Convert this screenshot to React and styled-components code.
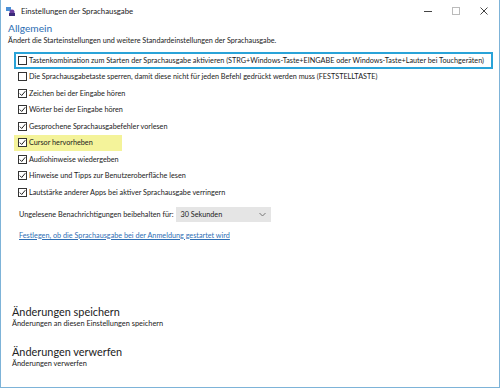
import styled, { createGlobalStyle } from 'styled-components';

const Global = createGlobalStyle`
  html, body { margin: 0; padding: 0; background: #fff; }
  body { font-family: Lato, "Open Sans", sans-serif; color: #1a1a1a; }
`;

const Window = styled.div`
  width: 500px;
  height: 388px;
  box-sizing: border-box;
  border: 1px solid #7db3d8;
  border-top: none;
  display: flex;
  flex-direction: column;
  overflow: hidden;
  background: #fff;
`;

const TitleBar = styled.div`
  height: 21px;
  display: flex;
  align-items: center;
  padding-left: 5px;
  font-size: 7.8px;
  color: #222;
  & .title { margin-left: 5px; flex: 1; }
`;

const WinButton = styled.div`
  width: 28px;
  height: 21px;
  display: flex;
  align-items: center;
  justify-content: center;
`;

const Content = styled.div`
  flex: 1;
  display: flex;
  flex-direction: column;
  padding: 0 0 0 7px;
`;

const Heading = styled.div`
  font-size: 10.2px;
  color: #2b6db3;
  line-height: 14px;
`;

const Sub = styled.div`
  font-size: 7.25px;
  line-height: 11px;
  margin-bottom: 6px;
`;

const List = styled.div`
  display: flex;
  flex-direction: column;
  padding-left: 6px;
`;

const Row = styled.div`
  display: flex;
  align-items: center;
  height: 16.5px;
  box-sizing: border-box;
  padding-left: 2px;
  font-size: 7.25px;
  white-space: nowrap;
  width: ${(p) => (p.$focused ? '479px' : 'auto')};
  align-self: flex-start;
  border: 2px solid ${(p) => (p.$focused ? '#2aa3d8' : 'transparent')};
  background: ${(p) => (p.$highlight ? '#f4f39a' : 'transparent')};
  padding-right: ${(p) => (p.$highlight ? '27px' : '0')};
`;

const Box = styled.span`
  width: 7px;
  height: 7px;
  border: 1px solid #333;
  background: #fff;
  margin-right: 2px;
  display: inline-flex;
  align-items: center;
  justify-content: center;
  flex-shrink: 0;
`;

const SelectRow = styled.div`
  display: flex;
  align-items: center;
  padding-left: 11px;
  margin-top: 6px;
  font-size: 7.25px;
`;

const Select = styled.div`
  margin-left: 3px;
  width: 95px;
  height: 15px;
  background: #e5e5e5;
  display: flex;
  align-items: center;
  justify-content: space-between;
  padding: 0 5px 0 4px;
  box-sizing: border-box;
`;

const Link = styled.a`
  margin: 8px 0 0 11px;
  font-size: 7.25px;
  line-height: 11px;
  color: #2f6fb5;
  text-decoration: underline;
`;

const Action = styled.div`
  display: flex;
  flex-direction: column;
  padding-left: 4px;
  margin-top: ${(p) => p.$top}px;
  & .t { font-size: 10.9px; line-height: 15px; color: #222; }
  & .s { font-size: 7.4px; line-height: 10px; }
`;

const Check = ({ on }) => (
  <Box>
    {on && (
      <svg width="7" height="7" viewBox="0 0 7 7">
        <path d="M0.8 3.6 L2.7 5.5 L6.3 1.2" fill="none" stroke="#222" strokeWidth="1" />
      </svg>
    )}
  </Box>
);

const items = [
  { t: 'Tastenkombination zum Starten der Sprachausgabe aktivieren (STRG+Windows-Taste+EINGABE oder Windows-Taste+Lauter bei Touchgeräten)', on: false, focused: true },
  { t: 'Die Sprachausgabetaste sperren, damit diese nicht für jeden Befehl gedrückt werden muss (FESTSTELLTASTE)', on: false },
  { t: 'Zeichen bei der Eingabe hören', on: true },
  { t: 'Wörter bei der Eingabe hören', on: true },
  { t: 'Gesprochene Sprachausgabefehler vorlesen', on: true },
  { t: 'Cursor hervorheben', on: true, highlight: true },
  { t: 'Audiohinweise wiedergeben', on: true },
  { t: 'Hinweise und Tipps zur Benutzeroberfläche lesen', on: true },
  { t: 'Lautstärke anderer Apps bei aktiver Sprachausgabe verringern', on: true },
];

export default function App() {
  return (
    <>
      <Global />
      <Window>
        <TitleBar>
          <svg width="10" height="10" viewBox="0 0 10 10">
            <rect x="0" y="1" width="5" height="4" fill="#4a8fd6" />
            <circle cx="6" cy="6" r="2.5" fill="#6a3fa0" />
            <rect x="3" y="7" width="6" height="3" fill="#3b2a7a" />
          </svg>
          <span className="title">Einstellungen der Sprachausgabe</span>
          <WinButton>
            <svg width="8" height="8" viewBox="0 0 8 8"><path d="M0 4.5 H8" stroke="#444" strokeWidth="1" /></svg>
          </WinButton>
          <WinButton>
            <svg width="8" height="8" viewBox="0 0 8 8"><rect x="0.5" y="0.5" width="7" height="7" fill="none" stroke="#bbb" /></svg>
          </WinButton>
          <WinButton>
            <svg width="8" height="8" viewBox="0 0 8 8"><path d="M0.5 0.5 L7.5 7.5 M7.5 0.5 L0.5 7.5" stroke="#444" strokeWidth="1" /></svg>
          </WinButton>
          <span style={{ width: 1 }} />
        </TitleBar>
        <Content>
          <Heading>Allgemein</Heading>
          <Sub>Ändert die Starteinstellungen und weitere Standardeinstellungen der Sprachausgabe.</Sub>
          <List>
            {items.map((it) => (
              <Row key={it.t} $focused={it.focused} $highlight={it.highlight}>
                <Check on={it.on} />
                {it.t}
              </Row>
            ))}
          </List>
          <SelectRow>
            Ungelesene Benachrichtigungen beibehalten für:
            <Select>
              <span>30 Sekunden</span>
              <svg width="7" height="5" viewBox="0 0 7 5"><path d="M0.5 1 L3.5 4 L6.5 1" fill="none" stroke="#777" /></svg>
            </Select>
          </SelectRow>
          <Link>Festlegen, ob die Sprachausgabe bei der Anmeldung gestartet wird</Link>
          <Action $top={63}>
            <span className="t">Änderungen speichern</span>
            <span className="s">Änderungen an diesen Einstellungen speichern</span>
          </Action>
          <Action $top={15}>
            <span className="t">Änderungen verwerfen</span>
            <span className="s">Änderungen verwerfen</span>
          </Action>
        </Content>
      </Window>
    </>
  );
}
